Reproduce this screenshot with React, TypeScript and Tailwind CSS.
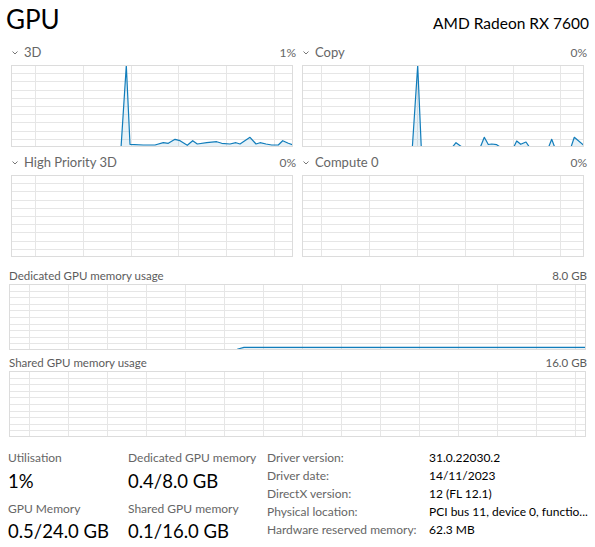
import React from "react";

type Pt = [number, number];

const LINE = "#117dbb";

function Graph({
  w,
  h,
  offset,
  spacing,
  rows = 10,
  ox,
  oy,
  pts,
}: {
  w: number;
  h: number;
  offset: number;
  spacing: number;
  rows?: number;
  ox: number;
  oy: number;
  pts?: Pt[];
}) {
  const vs: number[] = [];
  for (let x = offset; x < w - 1; x += spacing) vs.push(Math.round(x) + 0.5);
  const hs: number[] = [];
  for (let i = 1; i < rows; i++) hs.push(Math.round((i * h) / rows) + 0.5);
  const rel = (pts || []).map(([x, y]) => [x - ox, y - oy] as Pt);
  const line = rel.map(([x, y]) => `${x},${y}`).join(" ");
  const fill =
    rel.length > 0
      ? `${rel[0][0]},${h} ${line} ${rel[rel.length - 1][0]},${h}`
      : "";
  return (
    <svg width={w} height={h} className="block">
      <rect x={0} y={0} width={w} height={h} fill="#ffffff" />
      {vs.map((x) => (
        <line key={"v" + x} x1={x} x2={x} y1={0} y2={h} stroke="#e6e6e6" strokeWidth={1} />
      ))}
      {hs.map((y) => (
        <line key={"h" + y} x1={0} x2={w} y1={y} y2={y} stroke="#e6e6e6" strokeWidth={1} />
      ))}
      {rel.length > 0 && (
        <>
          <polygon points={fill} fill="rgba(17,125,187,0.10)" />
          <polyline points={line} fill="none" stroke={LINE} strokeWidth={1.2} strokeLinejoin="round" />
        </>
      )}
      <rect x={0.5} y={0.5} width={w - 1} height={h - 1} fill="none" stroke="#dcdcdc" strokeWidth={1} />
    </svg>
  );
}

function Chevron() {
  return (
    <svg width="6" height="4" viewBox="0 0 6 4" className="block">
      <polyline points="0.5,0.5 3,3 5.5,0.5" fill="none" stroke="#777" strokeWidth="1" />
    </svg>
  );
}

function EngineLabel({ name, value }: { name: string; value: string }) {
  return (
    <div className="flex items-center h-[17px] mr-[-3px] text-[12px] text-[#666666]">
      <div className="pl-[1px] w-[13px] flex">
        <Chevron />
      </div>
      <span className="flex-1 text-[13px]">{name}</span>
      <span>{value}</span>
    </div>
  );
}

const pts3d: Pt[] = [
  [121, 148],
  [126.3, 65.5],
  [130, 144.3],
  [143.3, 145],
  [155, 145],
  [163.3, 142.7],
  [168.3, 143.3],
  [175, 139.3],
  [180, 140.7],
  [187.3, 145.3],
  [192.7, 140.7],
  [197.3, 144],
  [206.7, 142.7],
  [216.7, 141.7],
  [221.7, 143.3],
  [230, 144],
  [236, 142.7],
  [240, 144],
  [250, 137.3],
  [256, 144],
  [260, 142.7],
  [266, 144],
  [271.7, 145],
  [278.3, 145],
  [282.7, 140.7],
  [288.3, 143.3],
  [293, 145],
];

const ptsCopy: Pt[] = [
  [412.3, 148],
  [417.7, 65.5],
  [421.3, 148],
  [451.7, 148],
  [456, 142.7],
  [463.3, 148],
  [480, 148],
  [484.3, 137.3],
  [488.3, 144.5],
  [491.7, 144],
  [496.7, 144.7],
  [501.7, 148],
  [513.3, 148],
  [516.7, 141],
  [520.7, 144.3],
  [526, 142],
  [530, 148],
  [548.3, 148],
  [551.7, 139.3],
  [555, 148],
  [570.7, 148],
  [574.3, 137.3],
  [584.5, 146],
];

const ptsDed: Pt[] = [
  [234, 351],
  [238, 349],
  [244, 347.3],
  [587, 347.3],
];

const details: [string, string][] = [
  ["Driver version:", "31.0.22030.2"],
  ["Driver date:", "14/11/2023"],
  ["DirectX version:", "12 (FL 12.1)"],
  ["Physical location:", "PCI bus 11, device 0, functio..."],
  ["Hardware reserved memory:", "62.3 MB"],
];

export default function App() {
  return (
    <div
      className="w-[595px] h-[547px] bg-white overflow-hidden text-black"
      style={{ fontFamily: '"Lato", "Noto Sans", sans-serif' }}
    >
      {/* Header */}
      <div className="flex justify-between items-start h-[44px] pl-[6px] pr-[6px]">
        <div className="text-[26px] leading-[38px] font-normal">GPU</div>
        <div className="text-[15.5px] leading-[16px] mt-[15px]">AMD Radeon RX 7600</div>
      </div>

      {/* Engines */}
      <div className="grid grid-cols-[282px_282px] gap-x-[9px] px-[11px]">
        <div className="flex flex-col gap-[4px]">
          <EngineLabel name="3D" value="1%" />
          <Graph w={282} h={82} offset={24} spacing={47.8} ox={11} oy={65} pts={pts3d} />
        </div>
        <div className="flex flex-col gap-[4px]">
          <EngineLabel name="Copy" value="0%" />
          <Graph w={282} h={82} offset={19.4} spacing={47.8} ox={302} oy={65} pts={ptsCopy} />
        </div>
        <div className="flex flex-col gap-[4px] mt-[7px]">
          <EngineLabel name="High Priority 3D" value="0%" />
          <Graph w={282} h={82} offset={24} spacing={47.8} ox={11} oy={175} />
        </div>
        <div className="flex flex-col gap-[4px] mt-[7px]">
          <EngineLabel name="Compute 0" value="0%" />
          <Graph w={282} h={82} offset={19.4} spacing={47.8} ox={302} oy={175} />
        </div>
      </div>

      {/* Memory */}
      <div className="flex flex-col px-[9px] mt-[10px]">
        <div className="flex justify-between h-[17px] items-center text-[11.5px] text-[#5c5c5c] mr-[-1px]">
          <span>Dedicated GPU memory usage</span>
          <span>8.0 GB</span>
        </div>
        <Graph w={577} h={66} offset={20} spacing={39} ox={9} oy={284} pts={ptsDed} />
        <div className="flex justify-between h-[17px] items-center text-[11.5px] text-[#5c5c5c] mr-[-1px] mt-[4px]">
          <span>Shared GPU memory usage</span>
          <span>16.0 GB</span>
        </div>
        <Graph w={577} h={66} offset={20} spacing={39} ox={9} oy={371} />
      </div>

      {/* Stats */}
      <div className="flex mt-[12px] pl-[8px]">
        <div className="flex flex-col w-[120px]">
          <div className="text-[12px] h-[18px] leading-[18px] text-[#666666]">Utilisation</div>
          <div className="text-[18.5px] h-[28px] leading-[28px]">1%</div>
          <div className="text-[12px] h-[18px] leading-[18px] text-[#666666] mt-[5px]">GPU Memory</div>
          <div className="text-[18.5px] h-[26px] leading-[26px] whitespace-nowrap">0.5/24.0 GB</div>
        </div>
        <div className="flex flex-col w-[139px]">
          <div className="text-[12px] h-[18px] leading-[18px] text-[#666666]">Dedicated GPU memory</div>
          <div className="text-[18.5px] h-[28px] leading-[28px]">0.4/8.0 GB</div>
          <div className="text-[12px] h-[18px] leading-[18px] text-[#666666] mt-[5px]">Shared GPU memory</div>
          <div className="text-[18.5px] h-[26px] leading-[26px] whitespace-nowrap">0.1/16.0 GB</div>
        </div>
        <div className="grid grid-cols-[162px_158px] auto-rows-[18px] text-[12px] leading-[18px]">
          {details.map(([k, v]) => (
            <React.Fragment key={k}>
              <div className="h-[18px] text-[#666666] whitespace-nowrap">{k}</div>
              <div className="h-[18px] whitespace-nowrap">{v}</div>
            </React.Fragment>
          ))}
        </div>
      </div>
    </div>
  );
}
